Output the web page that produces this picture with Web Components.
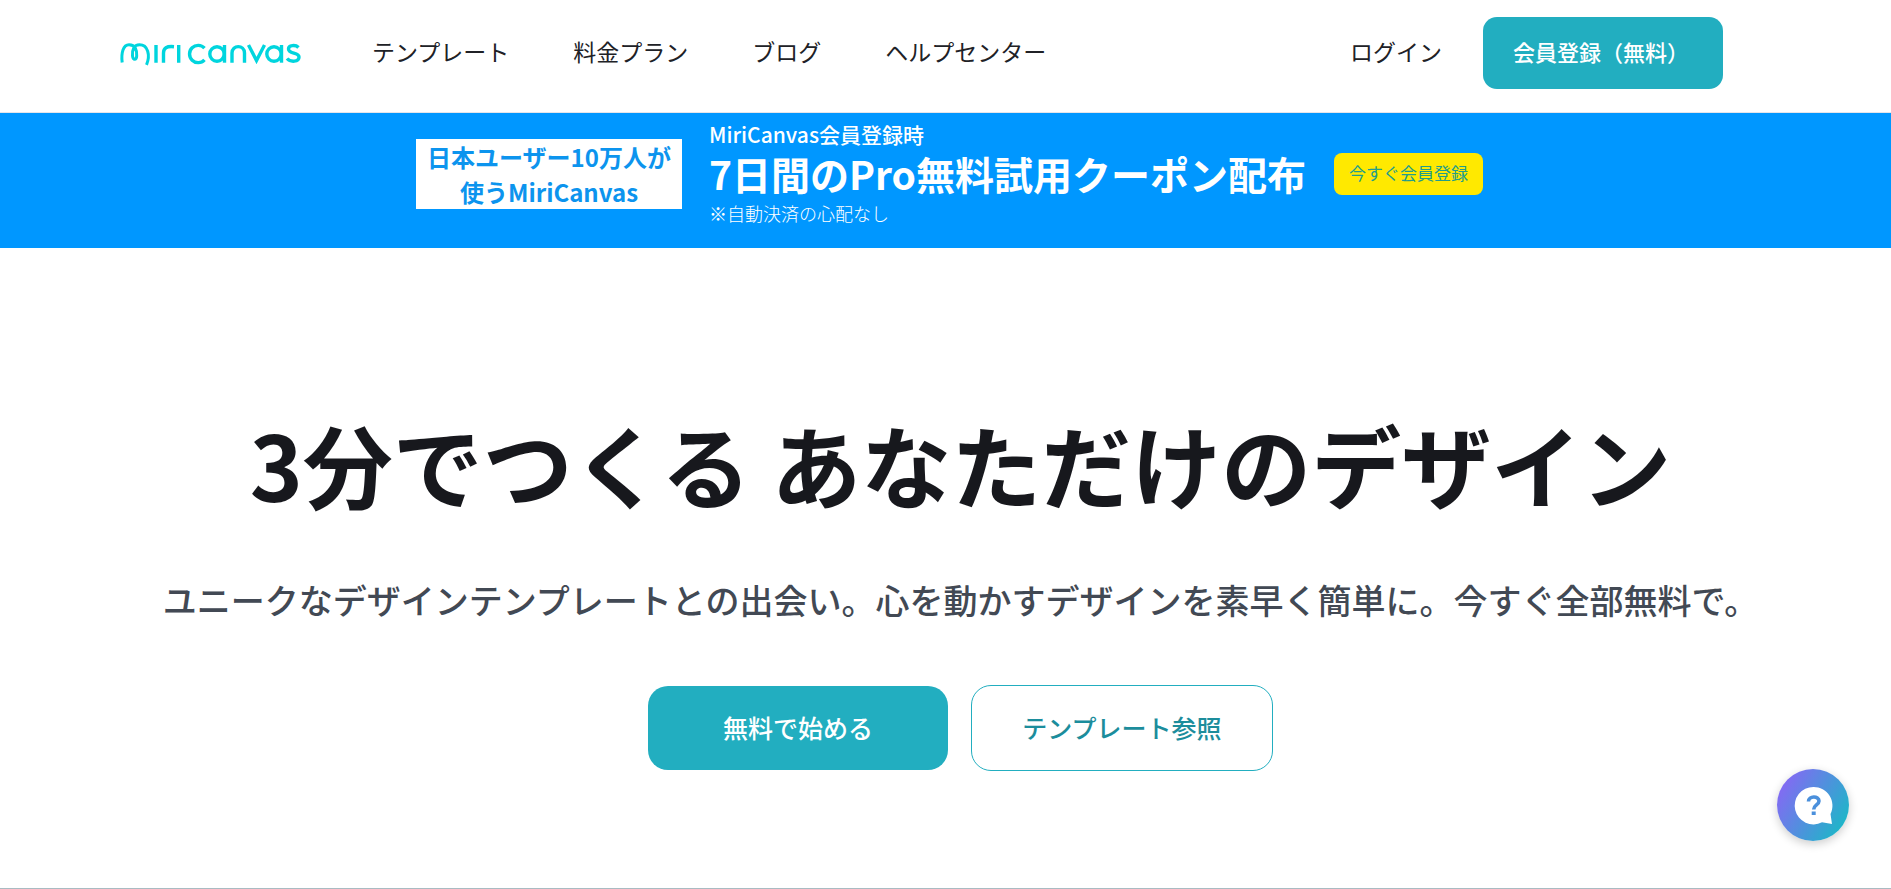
<!DOCTYPE html>
<html lang="ja">
<head>
<meta charset="utf-8">
<title>MiriCanvas</title>
<style>
  body { margin: 0; background: #fff; color: #17181d; font-family: "Noto Sans CJK JP", "Noto Sans", sans-serif; }
</style>
</head>
<body>
<miri-page></miri-page>

<template id="t-page">
  <style>:host { display: block; }</style>
  <miri-header></miri-header>
  <miri-banner></miri-banner>
  <miri-hero>
    <span slot="title">3分でつくる あなただけのデザイン</span>
    <span slot="lead">ユニークなデザインテンプレートとの出会い。心を動かすデザインを素早く簡単に。今すぐ全部無料で。</span>
    <miri-button slot="actions" size="large" variant="solid">無料で始める</miri-button>
    <miri-button slot="actions" size="large" variant="outline">テンプレート参照</miri-button>
  </miri-hero>
  <miri-help></miri-help>
</template>

<template id="t-button">
  <style>
    :host { display: inline-block; }
    button { box-sizing: border-box; display: block; margin: 0; border: 0; border-radius: 14px; background: #22aec0; color: #fff; font: 500 22px/32px "Noto Sans CJK JP", sans-serif; width: 240px; height: 72px; padding: 0 30px 4px; text-align: left; white-space: nowrap; cursor: pointer; }
    :host([size="large"]) button { width: 300px; height: 84px; padding: 0 0 2px; border-radius: 20px; font-size: 25px; text-align: center; }
    :host([variant="outline"]) button { width: 302px; height: 86px; background: #fff; border: 1px solid #22aec0; color: #1c8d9c; }
    :host([variant="yellow"]) button { width: 149px; height: 42px; padding: 0 0 2px; border-radius: 8px; background: #ffe900; color: #229c8c; font-size: 17px; font-weight: 400; text-align: center; }
  </style>
  <button type="button"><slot></slot></button>
</template>

<template id="t-logo">
  <style>
    :host { display: block; }
    svg { display: block; width: 180px; height: 22px; overflow: visible; }
  </style>
  <svg viewBox="0 0 180 22" fill="none" stroke="#00d5de" stroke-width="3.4" role="img" aria-label="miri canvas">
    <path stroke-width="3" d="M2.200 20.500C1 11 3.200 2.800 9 2.800c6.500 0 8 5.500 7.700 11-.2 4.500-3.700 4.500-4.200 0C12 7.500 14 2.800 19.500 2.800c8.500 0 11 10.500 7 20"/>
    <path d="M36 3v17.700M43.500 20.700V11c0-5 3-7 10.500-6.300M58.700 3v17.700"/>
    <path d="M84.500 6.200a8.600 8.600 0 1 0 0 11.600"/>
    <circle cx="97" cy="12" r="7.200"/><path d="M104.500 3v17.700"/>
    <path d="M112 20.700V11c0-8.500 12.500-8.500 12.500 0v9.700M128.500 3l8 15.500L144.500 3"/>
    <circle cx="154" cy="12" r="7.200"/><path d="M161.500 3v17.700"/>
    <path d="M178.500 5.500c-3-3-10-2.500-10 1.500 0 5.200 10.500 3 10.500 8 0 5-8.500 5.500-12 1.500"/>
  </svg>
</template>

<template id="t-header">
  <style>
    :host { display: block; border-bottom: 1px solid #e5e5ea; }
    header { display: flex; align-items: center; box-sizing: border-box; height: 112px; padding: 0 168px 6px 120px; font-size: 23px; line-height: 32px; }
    nav { display: flex; gap: 64px; margin-left: 72px; }
    a { padding-bottom: 5px; color: #202126; text-decoration: none; white-space: nowrap; }
    .login { margin-left: auto; margin-right: 41px; }
  </style>
  <header>
    <miri-logo></miri-logo>
    <nav>
      <a href="#templates">テンプレート</a>
      <a href="#pricing">料金プラン</a>
      <a href="#blog">ブログ</a>
      <a href="#help">ヘルプセンター</a>
    </nav>
    <a class="login" href="#login">ログイン</a>
    <miri-button variant="solid">会員登録（無料）</miri-button>
  </header>
</template>

<template id="t-banner">
  <style>
    :host { display: block; background: #0097ff; color: #fff; }
    section { display: flex; justify-content: center; align-items: center; box-sizing: border-box; height: 135px; padding: 0 0 13px 8px; }
    .badge { box-sizing: border-box; width: 266px; height: 70px; background: #fff; color: #0c94ee; font-weight: 700; font-size: 24px; line-height: 35px; text-align: center; white-space: nowrap; }
    .offer { margin: 0 28px 0 27px; white-space: nowrap; }
    p { margin: 0; }
    .when { font-size: 21px; line-height: 32px; font-weight: 500; }
    .main { font-size: 39px; line-height: 46px; font-weight: 700; }
    .note { font-size: 18px; line-height: 34px; font-weight: 300; }
  </style>
  <section>
    <div class="badge">日本ユーザー10万人が<br>使うMiriCanvas</div>
    <div class="offer">
      <p class="when">MiriCanvas会員登録時</p>
      <p class="main">7日間のPro無料試用クーポン配布</p>
      <p class="note">※自動決済の心配なし</p>
    </div>
    <miri-button variant="yellow">今すぐ会員登録</miri-button>
  </section>
</template>

<template id="t-hero">
  <style>
    :host { display: block; border-bottom: 1px solid #a9bbc2; }
    section { display: flex; flex-direction: column; align-items: center; padding: 150px 0 117px 30px; white-space: nowrap; }
    h1 { margin: 0; font-size: 90px; line-height: 130px; font-weight: 700; }
    p { margin: 47px 0 0; font-size: 34px; line-height: 50px; font-weight: 500; color: #424954; }
    .actions { display: flex; align-items: center; gap: 23px; margin-top: 60px; }
  </style>
  <section>
    <h1><slot name="title"></slot></h1>
    <p><slot name="lead"></slot></p>
    <div class="actions"><slot name="actions"></slot></div>
  </section>
</template>

<template id="t-help">
  <style>
    :host { display: block; position: fixed; right: 42px; bottom: 48px; }
    button { display: block; width: 72px; height: 72px; padding: 0; border: 0; border-radius: 50%; background: linear-gradient(120deg, #8668f4 10%, #1bb8c7 90%); box-shadow: 0 3px 10px rgba(0,0,0,.2); cursor: pointer; }
    svg { display: block; width: 72px; height: 72px; }
  </style>
  <button type="button" aria-label="ヘルプ">
    <svg viewBox="0 0 72 72"><path fill="#fff" d="M36.500 18a18.700 18.700 0 0 1 17 27l1.500 10-10-1.700A18.700 18.700 0 1 1 36.500 18z"/><path d="M31.500 32.500c0-6 10.500-6 10.500-.5 0 4-5.300 4-5.300 8.500" fill="none" stroke="#4b90dc" stroke-width="3.600"/><path d="M34.700 42.500h4V46h-4z" fill="#4b90dc"/></svg>
  </button>
</template>

<script>
  for (const name of ["button", "logo", "header", "banner", "hero", "help", "page"]) {
    const template = document.getElementById("t-" + name);
    customElements.define("miri-" + name, class extends HTMLElement {
      constructor() {
        super();
        this.attachShadow({ mode: "open" }).append(template.content.cloneNode(true));
      }
    });
  }
</script>
</body>
</html>
